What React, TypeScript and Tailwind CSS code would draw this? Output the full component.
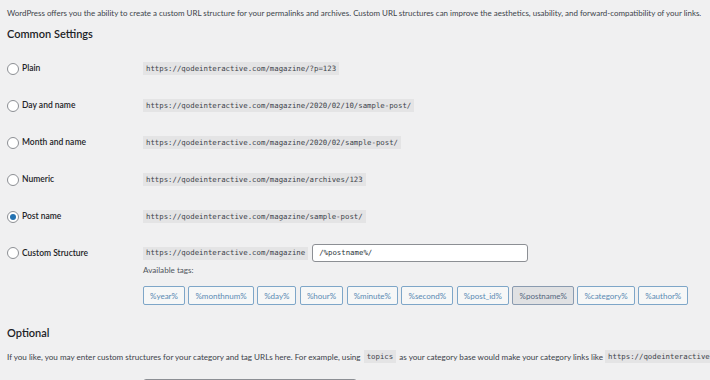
import React from "react";

const sans = { fontFamily: '"Segoe UI", Lato, "Open Sans", sans-serif' };

function Code({ children, className = "" }: { children: React.ReactNode; className?: string }) {
  return (
    <span
      className={`inline-flex items-center h-[13px] px-[3px] bg-[#e4e4e5] text-[#3c434a] text-[7.35px] whitespace-nowrap ${className}`}
      style={{ fontFamily: '"DejaVu Sans Mono", "Liberation Mono", monospace' }}
    >
      {children}
    </span>
  );
}

function Radio({ checked }: { checked?: boolean }) {
  return (
    <span className="w-[12px] h-[12px] rounded-full border border-[#8c8f94] bg-white flex items-center justify-center shrink-0">
      {checked && <span className="w-[6px] h-[6px] rounded-full bg-[#2271b1]" />}
    </span>
  );
}

const rows = [
  { label: "Plain", url: "https://qodeinteractive.com/magazine/?p=123" },
  { label: "Day and name", url: "https://qodeinteractive.com/magazine/2020/02/10/sample-post/" },
  { label: "Month and name", url: "https://qodeinteractive.com/magazine/2020/02/sample-post/" },
  { label: "Numeric", url: "https://qodeinteractive.com/magazine/archives/123" },
  { label: "Post name", url: "https://qodeinteractive.com/magazine/sample-post/", checked: true },
];

const tags = ["%year%", "%monthnum%", "%day%", "%hour%", "%minute%", "%second%", "%post_id%", "%postname%", "%category%", "%author%"];

export default function App() {
  return (
    <div className="w-[710px] h-[380px] overflow-hidden bg-[#f0f0f1] text-[#3c434a]" style={sans}>
      <div className="pl-[7px] pt-[7px]">
        <p className="text-[7.95px] leading-[12px] whitespace-nowrap">
          WordPress offers you the ability to create a custom URL structure for your permalinks and archives. Custom URL structures can improve the aesthetics, usability, and forward-compatibility of your links.
        </p>
        <h2 className="mt-[7px] text-[11px] leading-[16px] font-semibold text-[#1d2327]">Common Settings</h2>
        <div className="mt-[8px]">
          {rows.map((r) => (
            <div key={r.label} className="h-[37px] flex items-center">
              <div className="w-[136px] flex items-center gap-[3px]">
                <Radio checked={r.checked} />
                <span className="text-[8.5px] font-semibold text-[#1d2327]">{r.label}</span>
              </div>
              <Code>{r.url}</Code>
            </div>
          ))}
          <div className="flex pt-[9px]">
            <div className="w-[136px] h-[18px] flex items-center gap-[3px]">
              <Radio />
              <span className="text-[8.5px] font-semibold text-[#1d2327]">Custom Structure</span>
            </div>
            <div className="flex flex-col">
              <div className="flex items-center gap-[4px]">
                <Code>https://qodeinteractive.com/magazine</Code>
                <div
                  className="w-[216px] h-[18px] bg-white border border-[#8c8f94] rounded-[3px] flex items-center pl-[6px] text-[7.35px] text-[#2c3338]"
                  style={{ fontFamily: '"DejaVu Sans Mono", "Liberation Mono", monospace' }}
                >
                  /%postname%/
                </div>
              </div>
              <div className="mt-[2px] text-[8.1px] leading-[12px] text-[#50575e]">Available tags:</div>
              <div className="mt-[10px] flex gap-[3.5px]">
                {tags.map((t) => (
                  <span
                    key={t}
                    className={`h-[19px] px-[6px] flex items-center rounded-[2px] border text-[8px] ${
                      t === "%postname%"
                        ? "bg-[#e0e1e3] border-[#8a9bb0] text-[#55677e]"
                        : "bg-[#f6f7f7] border-[#7ea6c8] text-[#5a8ab3]"
                    }`}
                  >
                    {t}
                  </span>
                ))}
              </div>
            </div>
          </div>
        </div>
        <h2 className="mt-[20px] text-[11px] leading-[16px] font-semibold text-[#1d2327]">Optional</h2>
        <p className="mt-[9px] text-[8.1px] leading-[12px] whitespace-nowrap flex items-center">
          <span>If you like, you may enter custom structures for your category and tag URLs here. For example, using&nbsp;</span>
          <Code className="mx-[1px]">topics</Code>
          <span>&nbsp;as your category base would make your category links like&nbsp;</span>
          <Code>https://qodeinteractive.com/magazine/topics/uncategorized/</Code>
        </p>
        <div className="mt-[16px] ml-[136px] w-[214px] h-[18px] bg-white border border-[#8c8f94] rounded-[3px]" />
      </div>
    </div>
  );
}
